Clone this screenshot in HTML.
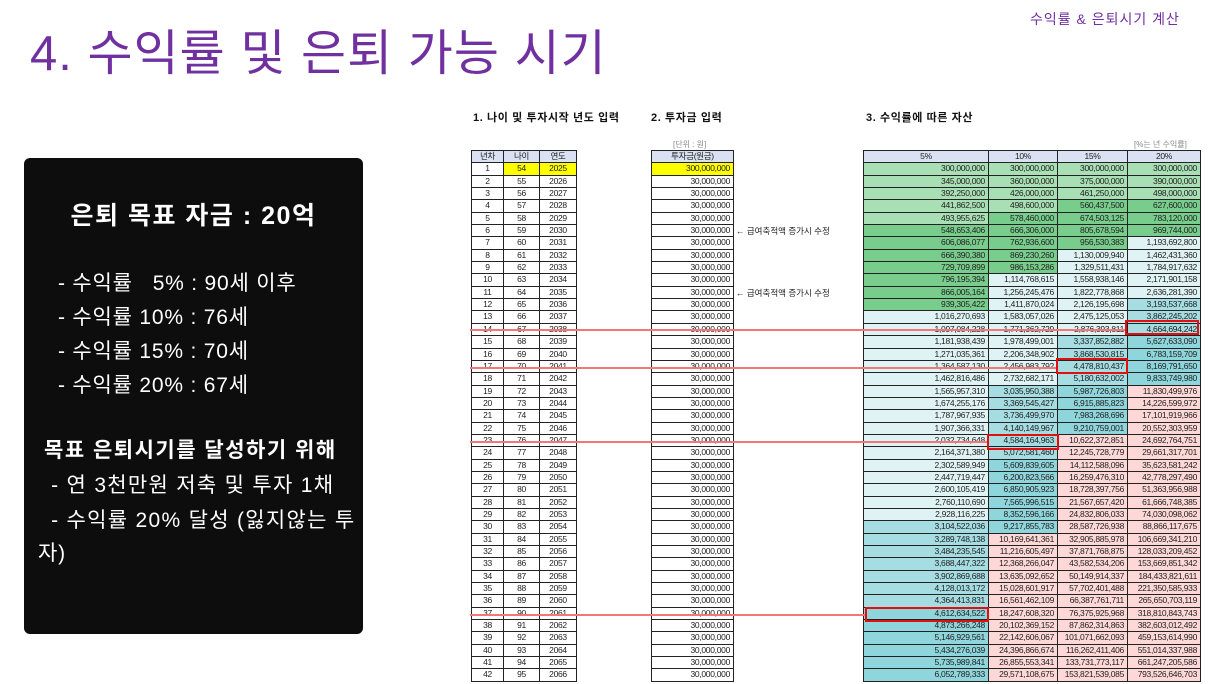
<!DOCTYPE html>
<html><head><meta charset="utf-8"><style>
*{margin:0;padding:0;box-sizing:border-box}
body{width:1216px;height:684px;background:#fff;position:relative;overflow:hidden;font-family:"Liberation Sans","Noto Sans CJK KR",sans-serif}
.title{position:absolute;left:30px;top:14px;font-size:49px;color:#7030a0;letter-spacing:1px;white-space:nowrap}
.tr{position:absolute;left:1030px;top:9px;font-size:14px;color:#7030a0;letter-spacing:1px;white-space:nowrap}
.box{position:absolute;left:24px;top:158px;width:339px;height:476px;background:#0d0d0d;border-radius:6px;color:#fff}
.box div{position:absolute;white-space:nowrap}
.lbl{position:absolute;font-size:11px;font-weight:bold;color:#111;white-space:nowrap;letter-spacing:0.6px}
.unit{position:absolute;font-size:8px;color:#888;white-space:nowrap}
.g{position:absolute;display:grid;border-left:1px solid #222;border-top:1px solid #222;grid-auto-rows:12.35px;font-size:8.5px;color:#222;letter-spacing:-0.3px}
.g div{border-right:1px solid #222;border-bottom:1px solid #222;line-height:11px;white-space:nowrap;overflow:hidden}
.c{text-align:center}.r{text-align:right;padding-right:3px}
.h{background:#d9e1f2;text-align:center}
.y{background:#ffff00}
.lg{background:#a8dfb4}.gr{background:#78cd8c}.pl{background:#e0f3f4}.tl{background:#a5dde2}.tk{background:#8fd5dc}.pk{background:#fdd8d6}
.note{position:absolute;left:736px;font-size:8.5px;color:#222;white-space:nowrap}
.rl{position:absolute;left:470px;height:1.5px;background:#f07878}
.rb{position:absolute;border:2px solid #e01010}
.it{font-size:21px;letter-spacing:0.8px}
</style></head><body>
<div class="title">4. 수익률 및 은퇴 가능 시기</div>
<div class="tr">수익률 &amp; 은퇴시기 계산</div>
<div class="box">
<div style="left:0;width:339px;text-align:center;top:38px;font-size:25px;font-weight:bold;letter-spacing:1.5px">은퇴 목표 자금 : 20억</div>
<div class="it" style="left:34px;top:109px">- 수익률 &nbsp;&nbsp;5% : 90세 이후</div>
<div class="it" style="left:34px;top:143px">- 수익률 10% : 76세</div>
<div class="it" style="left:34px;top:177px">- 수익률 15% : 70세</div>
<div class="it" style="left:34px;top:211px">- 수익률 20% : 67세</div>
<div class="it" style="left:20px;top:276px;font-weight:bold;letter-spacing:1.5px">목표 은퇴시기를 달성하기 위해</div>
<div class="it" style="left:20px;top:311px;letter-spacing:1.3px">&nbsp;- 연 3천만원 저축 및 투자 1채</div>
<div class="it" style="left:20px;top:346px;letter-spacing:1.3px">&nbsp;- 수익률 20% 달성 (잃지않는 투</div>
<div class="it" style="left:14px;top:379px">자)</div>
</div>
<div class="lbl" style="left:473px;top:109px">1. 나이 및 투자시작 년도 입력</div>
<div class="lbl" style="left:651px;top:109px">2. 투자금 입력</div>
<div class="lbl" style="left:866px;top:109px">3. 수익률에 따른 자산</div>
<div class="unit" style="left:673px;top:139px">[단위 : 원]</div>
<div class="unit" style="left:1134px;top:139px">[%는 년 수익률]</div>

<div class="g" style="left:471px;top:150px;grid-template-columns:32px 36px 37px">
<div class="h">년차</div><div class="h">나이</div><div class="h">연도</div>
<div class="c">1</div><div class="c y">54</div><div class="c y">2025</div>
<div class="c">2</div><div class="c">55</div><div class="c">2026</div>
<div class="c">3</div><div class="c">56</div><div class="c">2027</div>
<div class="c">4</div><div class="c">57</div><div class="c">2028</div>
<div class="c">5</div><div class="c">58</div><div class="c">2029</div>
<div class="c">6</div><div class="c">59</div><div class="c">2030</div>
<div class="c">7</div><div class="c">60</div><div class="c">2031</div>
<div class="c">8</div><div class="c">61</div><div class="c">2032</div>
<div class="c">9</div><div class="c">62</div><div class="c">2033</div>
<div class="c">10</div><div class="c">63</div><div class="c">2034</div>
<div class="c">11</div><div class="c">64</div><div class="c">2035</div>
<div class="c">12</div><div class="c">65</div><div class="c">2036</div>
<div class="c">13</div><div class="c">66</div><div class="c">2037</div>
<div class="c">14</div><div class="c">67</div><div class="c">2038</div>
<div class="c">15</div><div class="c">68</div><div class="c">2039</div>
<div class="c">16</div><div class="c">69</div><div class="c">2040</div>
<div class="c">17</div><div class="c">70</div><div class="c">2041</div>
<div class="c">18</div><div class="c">71</div><div class="c">2042</div>
<div class="c">19</div><div class="c">72</div><div class="c">2043</div>
<div class="c">20</div><div class="c">73</div><div class="c">2044</div>
<div class="c">21</div><div class="c">74</div><div class="c">2045</div>
<div class="c">22</div><div class="c">75</div><div class="c">2046</div>
<div class="c">23</div><div class="c">76</div><div class="c">2047</div>
<div class="c">24</div><div class="c">77</div><div class="c">2048</div>
<div class="c">25</div><div class="c">78</div><div class="c">2049</div>
<div class="c">26</div><div class="c">79</div><div class="c">2050</div>
<div class="c">27</div><div class="c">80</div><div class="c">2051</div>
<div class="c">28</div><div class="c">81</div><div class="c">2052</div>
<div class="c">29</div><div class="c">82</div><div class="c">2053</div>
<div class="c">30</div><div class="c">83</div><div class="c">2054</div>
<div class="c">31</div><div class="c">84</div><div class="c">2055</div>
<div class="c">32</div><div class="c">85</div><div class="c">2056</div>
<div class="c">33</div><div class="c">86</div><div class="c">2057</div>
<div class="c">34</div><div class="c">87</div><div class="c">2058</div>
<div class="c">35</div><div class="c">88</div><div class="c">2059</div>
<div class="c">36</div><div class="c">89</div><div class="c">2060</div>
<div class="c">37</div><div class="c">90</div><div class="c">2061</div>
<div class="c">38</div><div class="c">91</div><div class="c">2062</div>
<div class="c">39</div><div class="c">92</div><div class="c">2063</div>
<div class="c">40</div><div class="c">93</div><div class="c">2064</div>
<div class="c">41</div><div class="c">94</div><div class="c">2065</div>
<div class="c">42</div><div class="c">95</div><div class="c">2066</div>
</div>

<div class="g" style="left:651px;top:150px;grid-template-columns:82px">
<div class="h">투자금(원금)</div><div class="r y">300,000,000</div>
<div class="r">30,000,000</div><div class="r">30,000,000</div><div class="r">30,000,000</div><div class="r">30,000,000</div><div class="r">30,000,000</div>
<div class="r">30,000,000</div><div class="r">30,000,000</div><div class="r">30,000,000</div><div class="r">30,000,000</div><div class="r">30,000,000</div>
<div class="r">30,000,000</div><div class="r">30,000,000</div><div class="r">30,000,000</div><div class="r">30,000,000</div><div class="r">30,000,000</div>
<div class="r">30,000,000</div><div class="r">30,000,000</div><div class="r">30,000,000</div><div class="r">30,000,000</div><div class="r">30,000,000</div>
<div class="r">30,000,000</div><div class="r">30,000,000</div><div class="r">30,000,000</div><div class="r">30,000,000</div><div class="r">30,000,000</div>
<div class="r">30,000,000</div><div class="r">30,000,000</div><div class="r">30,000,000</div><div class="r">30,000,000</div><div class="r">30,000,000</div>
<div class="r">30,000,000</div><div class="r">30,000,000</div><div class="r">30,000,000</div><div class="r">30,000,000</div><div class="r">30,000,000</div>
<div class="r">30,000,000</div><div class="r">30,000,000</div><div class="r">30,000,000</div><div class="r">30,000,000</div><div class="r">30,000,000</div>
<div class="r">30,000,000</div>
</div>
<div class="note" style="top:225px">← 급여축적액 증가시 수정</div>
<div class="note" style="top:287px">← 급여축적액 증가시 수정</div>

<div class="g" style="left:863px;top:150px;grid-template-columns:125px 69px 70px 73px">
<div class="h">5%</div><div class="h">10%</div><div class="h">15%</div><div class="h">20%</div>
<div class="r lg">300,000,000</div><div class="r lg">300,000,000</div><div class="r lg">300,000,000</div><div class="r lg">300,000,000</div>
<div class="r lg">345,000,000</div><div class="r lg">360,000,000</div><div class="r lg">375,000,000</div><div class="r lg">390,000,000</div>
<div class="r lg">392,250,000</div><div class="r lg">426,000,000</div><div class="r lg">461,250,000</div><div class="r lg">498,000,000</div>
<div class="r lg">441,862,500</div><div class="r lg">498,600,000</div><div class="r gr">560,437,500</div><div class="r gr">627,600,000</div>
<div class="r lg">493,955,625</div><div class="r gr">578,460,000</div><div class="r gr">674,503,125</div><div class="r gr">783,120,000</div>
<div class="r gr">548,653,406</div><div class="r gr">666,306,000</div><div class="r gr">805,678,594</div><div class="r gr">969,744,000</div>
<div class="r gr">606,086,077</div><div class="r gr">762,936,600</div><div class="r gr">956,530,383</div><div class="r pl">1,193,692,800</div>
<div class="r gr">666,390,380</div><div class="r gr">869,230,260</div><div class="r pl">1,130,009,940</div><div class="r pl">1,462,431,360</div>
<div class="r gr">729,709,899</div><div class="r gr">986,153,286</div><div class="r pl">1,329,511,431</div><div class="r pl">1,784,917,632</div>
<div class="r gr">796,195,394</div><div class="r pl">1,114,768,615</div><div class="r pl">1,558,938,146</div><div class="r pl">2,171,901,158</div>
<div class="r gr">866,005,164</div><div class="r pl">1,256,245,476</div><div class="r pl">1,822,778,868</div><div class="r pl">2,636,281,390</div>
<div class="r gr">939,305,422</div><div class="r pl">1,411,870,024</div><div class="r pl">2,126,195,698</div><div class="r tl">3,193,537,668</div>
<div class="r pl">1,016,270,693</div><div class="r pl">1,583,057,026</div><div class="r pl">2,475,125,053</div><div class="r tl">3,862,245,202</div>
<div class="r pl">1,097,084,228</div><div class="r pl">1,771,362,729</div><div class="r pl">2,876,393,811</div><div class="r tl">4,664,694,242</div>
<div class="r pl">1,181,938,439</div><div class="r pl">1,978,499,001</div><div class="r tl">3,337,852,882</div><div class="r tk">5,627,633,090</div>
<div class="r pl">1,271,035,361</div><div class="r pl">2,206,348,902</div><div class="r tl">3,868,530,815</div><div class="r tk">6,783,159,709</div>
<div class="r pl">1,364,587,130</div><div class="r pl">2,456,983,792</div><div class="r tl">4,478,810,437</div><div class="r tk">8,169,791,650</div>
<div class="r pl">1,462,816,486</div><div class="r pl">2,732,682,171</div><div class="r tl">5,180,632,002</div><div class="r tk">9,833,749,980</div>
<div class="r pl">1,565,957,310</div><div class="r tl">3,035,950,388</div><div class="r tk">5,987,726,803</div><div class="r pk">11,830,499,976</div>
<div class="r pl">1,674,255,176</div><div class="r tl">3,369,545,427</div><div class="r tk">6,915,885,823</div><div class="r pk">14,226,599,972</div>
<div class="r pl">1,787,967,935</div><div class="r tl">3,736,499,970</div><div class="r tk">7,983,268,696</div><div class="r pk">17,101,919,966</div>
<div class="r pl">1,907,366,331</div><div class="r tl">4,140,149,967</div><div class="r tk">9,210,759,001</div><div class="r pk">20,552,303,959</div>
<div class="r pl">2,032,734,648</div><div class="r tl">4,584,164,963</div><div class="r pk">10,622,372,851</div><div class="r pk">24,692,764,751</div>
<div class="r pl">2,164,371,380</div><div class="r tl">5,072,581,460</div><div class="r pk">12,245,728,779</div><div class="r pk">29,661,317,701</div>
<div class="r pl">2,302,589,949</div><div class="r tk">5,609,839,605</div><div class="r pk">14,112,588,096</div><div class="r pk">35,623,581,242</div>
<div class="r pl">2,447,719,447</div><div class="r tk">6,200,823,566</div><div class="r pk">16,259,476,310</div><div class="r pk">42,778,297,490</div>
<div class="r pl">2,600,105,419</div><div class="r tk">6,850,905,923</div><div class="r pk">18,728,397,756</div><div class="r pk">51,363,956,988</div>
<div class="r pl">2,760,110,690</div><div class="r tk">7,565,996,515</div><div class="r pk">21,567,657,420</div><div class="r pk">61,666,748,385</div>
<div class="r pl">2,928,116,225</div><div class="r tk">8,352,596,166</div><div class="r pk">24,832,806,033</div><div class="r pk">74,030,098,062</div>
<div class="r tl">3,104,522,036</div><div class="r tk">9,217,855,783</div><div class="r pk">28,587,726,938</div><div class="r pk">88,866,117,675</div>
<div class="r tl">3,289,748,138</div><div class="r pk">10,169,641,361</div><div class="r pk">32,905,885,978</div><div class="r pk">106,669,341,210</div>
<div class="r tl">3,484,235,545</div><div class="r pk">11,216,605,497</div><div class="r pk">37,871,768,875</div><div class="r pk">128,033,209,452</div>
<div class="r tl">3,688,447,322</div><div class="r pk">12,368,266,047</div><div class="r pk">43,582,534,206</div><div class="r pk">153,669,851,342</div>
<div class="r tl">3,902,869,688</div><div class="r pk">13,635,092,652</div><div class="r pk">50,149,914,337</div><div class="r pk">184,433,821,611</div>
<div class="r tl">4,128,013,172</div><div class="r pk">15,028,601,917</div><div class="r pk">57,702,401,488</div><div class="r pk">221,350,585,933</div>
<div class="r tl">4,364,413,831</div><div class="r pk">16,561,462,109</div><div class="r pk">66,387,761,711</div><div class="r pk">265,650,703,119</div>
<div class="r tk">4,612,634,522</div><div class="r pk">18,247,608,320</div><div class="r pk">76,375,925,968</div><div class="r pk">318,810,843,743</div>
<div class="r tk">4,873,266,248</div><div class="r pk">20,102,369,152</div><div class="r pk">87,862,314,863</div><div class="r pk">382,603,012,492</div>
<div class="r tk">5,146,929,561</div><div class="r pk">22,142,606,067</div><div class="r pk">101,071,662,093</div><div class="r pk">459,153,614,990</div>
<div class="r tk">5,434,276,039</div><div class="r pk">24,396,866,674</div><div class="r pk">116,262,411,406</div><div class="r pk">551,014,337,988</div>
<div class="r tk">5,735,989,841</div><div class="r pk">26,855,553,341</div><div class="r pk">133,731,773,117</div><div class="r pk">661,247,205,586</div>
<div class="r tk">6,052,789,333</div><div class="r pk">29,571,108,675</div><div class="r pk">153,821,539,085</div><div class="r pk">793,526,646,703</div>
</div>

<div class="rl" style="top:329px;width:656px"></div>
<div class="rl" style="top:367px;width:587px"></div>
<div class="rl" style="top:441px;width:518px"></div>
<div class="rl" style="top:614px;width:396px"></div>
<div class="rb" style="left:1125px;top:320px;width:74px;height:15px"></div>
<div class="rb" style="left:1056px;top:358px;width:72px;height:16px"></div>
<div class="rb" style="left:987px;top:434px;width:72px;height:16px"></div>
<div class="rb" style="left:865px;top:607px;width:124px;height:15px"></div>
</body></html>
